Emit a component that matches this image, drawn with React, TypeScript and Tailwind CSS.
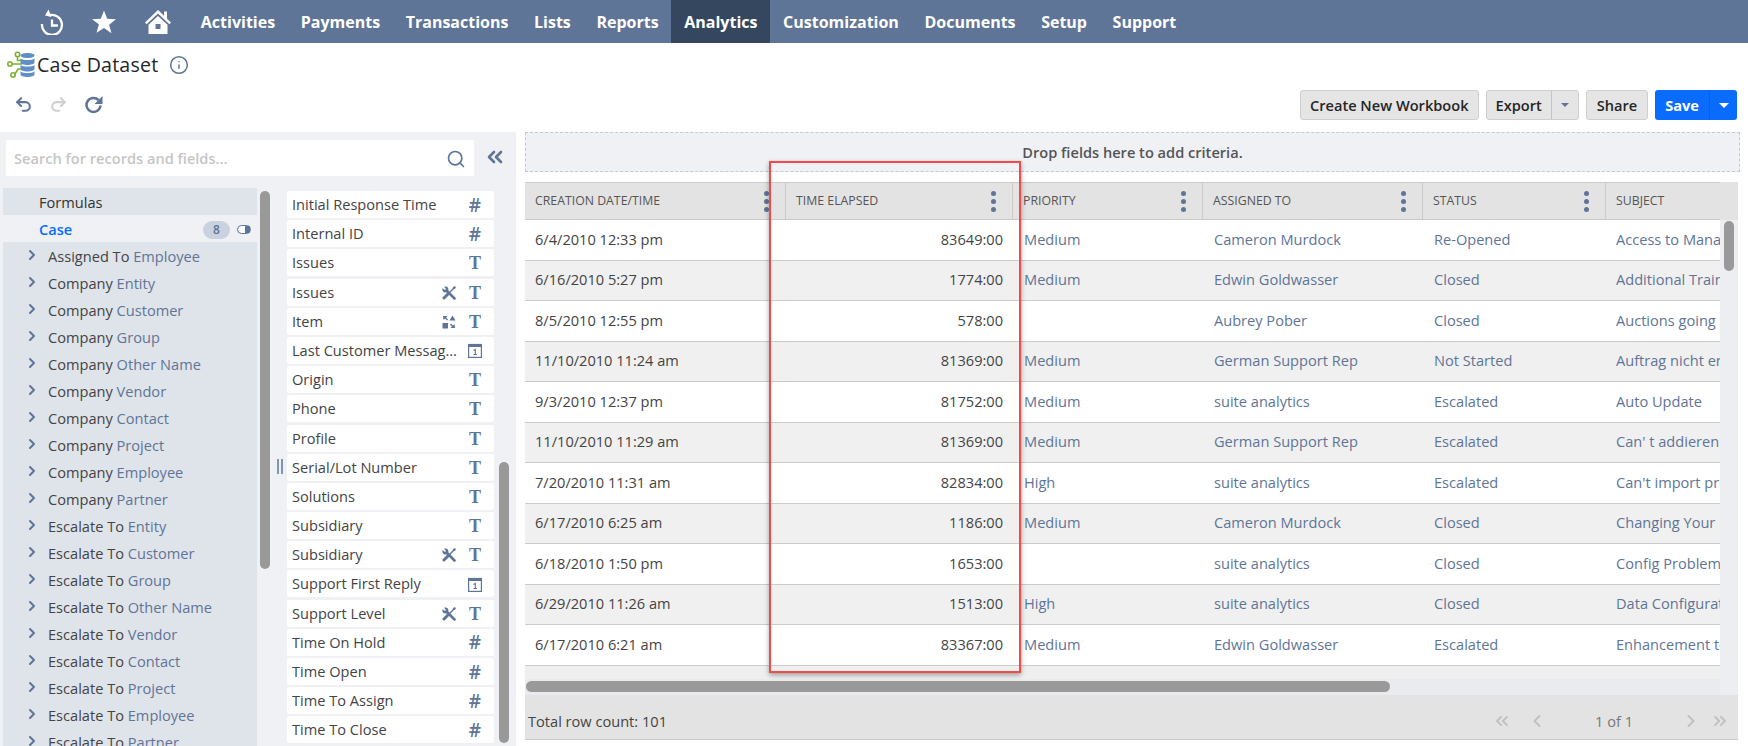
import { ChevronRight, ChevronsLeft, ChevronsRight, ChevronLeft, Info, Redo2, Search, Undo2 } from "lucide-react";

const navItems = ["Activities", "Payments", "Transactions", "Lists", "Reports", "Analytics", "Customization", "Documents", "Setup", "Support"];

const records = [
  ["Assigned To", "Employee"],
  ["Company", "Entity"],
  ["Company", "Customer"],
  ["Company", "Group"],
  ["Company", "Other Name"],
  ["Company", "Vendor"],
  ["Company", "Contact"],
  ["Company", "Project"],
  ["Company", "Employee"],
  ["Company", "Partner"],
  ["Escalate To", "Entity"],
  ["Escalate To", "Customer"],
  ["Escalate To", "Group"],
  ["Escalate To", "Other Name"],
  ["Escalate To", "Vendor"],
  ["Escalate To", "Contact"],
  ["Escalate To", "Project"],
  ["Escalate To", "Employee"],
  ["Escalate To", "Partner"],
];

type FieldType = "num" | "text" | "date";
const fields: { name: string; type: FieldType; extra?: "tools" | "shapes" }[] = [
  { name: "Initial Response Time", type: "num" },
  { name: "Internal ID", type: "num" },
  { name: "Issues", type: "text" },
  { name: "Issues", type: "text", extra: "tools" },
  { name: "Item", type: "text", extra: "shapes" },
  { name: "Last Customer Message Date", type: "date" },
  { name: "Origin", type: "text" },
  { name: "Phone", type: "text" },
  { name: "Profile", type: "text" },
  { name: "Serial/Lot Number", type: "text" },
  { name: "Solutions", type: "text" },
  { name: "Subsidiary", type: "text" },
  { name: "Subsidiary", type: "text", extra: "tools" },
  { name: "Support First Reply", type: "date" },
  { name: "Support Level", type: "text", extra: "tools" },
  { name: "Time On Hold", type: "num" },
  { name: "Time Open", type: "num" },
  { name: "Time To Assign", type: "num" },
  { name: "Time To Close", type: "num" },
];

const columns = [
  { label: "CREATION DATE/TIME", w: "w-[261px]" },
  { label: "TIME ELAPSED", w: "w-[227px]" },
  { label: "PRIORITY", w: "w-[190px]" },
  { label: "ASSIGNED TO", w: "w-[220px]" },
  { label: "STATUS", w: "w-[183px]" },
  { label: "SUBJECT", w: "w-[114px]" },
];

const rows = [
  ["6/4/2010 12:33 pm", "83649:00", "Medium", "Cameron Murdock", "Re-Opened", "Access to Manager"],
  ["6/16/2010 5:27 pm", "1774:00", "Medium", "Edwin Goldwasser", "Closed", "Additional Training"],
  ["8/5/2010 12:55 pm", "578:00", "", "Aubrey Pober", "Closed", "Auctions going live"],
  ["11/10/2010 11:24 am", "81369:00", "Medium", "German Support Rep", "Not Started", "Auftrag nicht erfasst"],
  ["9/3/2010 12:37 pm", "81752:00", "Medium", "suite analytics", "Escalated", "Auto Update"],
  ["11/10/2010 11:29 am", "81369:00", "Medium", "German Support Rep", "Escalated", "Can' t addieren"],
  ["7/20/2010 11:31 am", "82834:00", "High", "suite analytics", "Escalated", "Can't import products"],
  ["6/17/2010 6:25 am", "1186:00", "Medium", "Cameron Murdock", "Closed", "Changing Your Plan"],
  ["6/18/2010 1:50 pm", "1653:00", "", "suite analytics", "Closed", "Config Problem"],
  ["6/29/2010 11:26 am", "1513:00", "High", "suite analytics", "Closed", "Data Configuration"],
  ["6/17/2010 6:21 am", "83367:00", "Medium", "Edwin Goldwasser", "Escalated", "Enhancement to"],
];

function HistoryIcon() {
  return (
    <svg width="24" height="26" viewBox="0 0 24 26" fill="none" stroke="white" strokeWidth="2.3" className="shrink-0">
      <path d="M2 15a10 10 0 1 0 7.500-8.800" />
      <path d="M12 10.500v6h6" />
      <path d="M8.500 0.500l3 7.500-6.500-1.500z" fill="white" stroke="none" />
    </svg>
  );
}

function StarIcon() {
  return (
    <svg width="24" height="24" viewBox="0 0 24 24" fill="white" className="shrink-0">
      <path d="M12 0.500l3.200 8.300 8.800.4-6.900 5.500 2.400 8.600L12 18l-7.500 4.800 2.400-8.600L0 9.200l8.800-.4z" />
    </svg>
  );
}

function HomeIcon() {
  return (
    <svg width="28" height="26" viewBox="0 0 28 26" fill="white" className="shrink-0">
      <path d="M14 1L1 13.500l1.600 1.700L14 4.600l11.400 10.600 1.600-1.700-4-3.800V2.500h-3v4.200z" />
      <path fillRule="evenodd" d="M14 7L4.500 15.800V25h19v-9.200zM11.500 15h5v5h-5z" />
    </svg>
  );
}

function DatasetIcon() {
  return (
    <svg width="30" height="30" viewBox="0 0 30 30" fill="none" className="shrink-0">
      <g stroke="#7ab32e" strokeWidth="1.600">
        <circle cx="11.500" cy="4.500" r="2.200" />
        <circle cx="4" cy="14" r="2.200" />
        <circle cx="7" cy="25" r="2.200" />
        <path d="M11.500 7v3.500h5M6.200 14h10M9 24l3-5h4.500" />
      </g>
      <g fill="#5f8ec9">
        <path d="M14.500 5.500c0-1.600 3.200-2.500 7-2.500s7 .9 7 2.500-3.200 2.500-7 2.500-7-.9-7-2.500z" />
        <path d="M14.500 8.500c1.500 1 4 1.500 7 1.500s5.500-.5 7-1.500v4c0 1.500-3.200 2.500-7 2.500s-7-1-7-2.500z" />
        <path d="M14.500 15c1.500 1 4 1.500 7 1.500s5.500-.5 7-1.500v4c0 1.500-3.200 2.500-7 2.500s-7-1-7-2.500z" />
        <path d="M14.500 21.500c1.500 1 4 1.500 7 1.500s5.500-.5 7-1.500v3c0 1.500-3.200 2.500-7 2.500s-7-1-7-2.500z" />
      </g>
    </svg>
  );
}

function RefreshIcon() {
  return (
    <svg width="19" height="19" viewBox="0 0 19 19" fill="none" stroke="#5f7597" strokeWidth="2.500" className="shrink-0">
      <path d="M14.500 5a7 7 0 1 0 2 5.500" />
      <path d="M18.500 1v8h-8z" fill="#5f7597" stroke="none" />
    </svg>
  );
}

function ToolsIcon() {
  return (
    <svg width="14" height="14" viewBox="0 0 14 14" fill="none" stroke="#5f7597" className="shrink-0">
      {/* wrench */}
      <path d="M5 5l7.500 7.500" strokeWidth="2.600" strokeLinecap="round" />
      <circle cx="3.400" cy="3.400" r="3" fill="#5f7597" stroke="none" />
      <path d="M0 0.500L3.400 3.400 0.500 0z" fill="white" stroke="white" strokeWidth="1.600" />
      {/* screwdriver */}
      <path d="M7 7l5-5" strokeWidth="1.400" />
      <path d="M2 12l4-4" strokeWidth="3" strokeLinecap="round" />
      <path d="M11 1.500L13 0.500l.5.500-1 2z" fill="#5f7597" strokeWidth="0.800" />
    </svg>
  );
}

function ShapesIcon() {
  return (
    <svg width="14" height="14" viewBox="0 0 14 14" fill="#5f7597" className="shrink-0">
      <path d="M10.500 0.500l3 5h-6z" />
      <rect x="0.500" y="8" width="5.500" height="5.500" />
      <path d="M1 1h4.500L4 2.500l2 2-1 1-2-2L1.500 5zM13 13H8.500l1.500-1.500-2-2 1-1 2 2 1.500-1.500z" />
    </svg>
  );
}

function CalendarIcon() {
  return (
    <svg width="14" height="15" viewBox="0 0 14 15" fill="none" className="shrink-0">
      <rect x="0.600" y="1.500" width="12.800" height="12.900" stroke="#5f7597" strokeWidth="1.200" fill="white" />
      <rect x="0.600" y="1" width="12.800" height="3" fill="#5f7597" />
      <path d="M5.500 7.500L7.300 6.500v5M5.500 11.500h3.500" stroke="#5f7597" strokeWidth="1.100" />
    </svg>
  );
}

function TypeGlyph({ type }: { type: FieldType }) {
  if (type === "date") return <CalendarIcon />;
  if (type === "num") {
    return <span className="w-[14px] text-center text-[19px] leading-none font-semibold text-[#5f7597]">#</span>;
  }
  return <span className="w-[14px] text-center font-['Liberation_Serif',serif] text-[18px] leading-none font-bold text-[#5f7597]">T</span>;
}

function DotsMenu() {
  return (
    <div className="flex shrink-0 flex-col gap-[3px]">
      <div className="h-[5px] w-[5px] rounded-full bg-[#5f7597]" />
      <div className="h-[5px] w-[5px] rounded-full bg-[#5f7597]" />
      <div className="h-[5px] w-[5px] rounded-full bg-[#5f7597]" />
    </div>
  );
}

export default function App() {
  return (
    <div className="relative flex h-[746px] w-full flex-col overflow-hidden bg-white font-['Open_Sans',sans-serif] text-[14.600px] text-[#444]">
      {/* Top nav */}
      <header className="flex h-[43px] shrink-0 items-center bg-[#5f7597] pl-[40px]">
        <div className="flex items-center gap-[28px]">
          <HistoryIcon />
          <StarIcon />
          <HomeIcon />
        </div>
        <nav className="ml-[16px] flex h-full items-center">
          {navItems.map((item) => (
            <div
              key={item}
              className={`flex h-full items-center px-[12.800px] text-[16px] font-bold text-white ${item === "Analytics" ? "bg-[#34475f]" : ""}`}
            >
              {item}
            </div>
          ))}
        </nav>
      </header>

      {/* Title */}
      <div className="flex h-[44px] shrink-0 items-center pl-[6px]">
        <DatasetIcon />
        <h1 className="ml-[1px] text-[19.600px] font-normal tracking-[0.2px] text-[#262626]">Case Dataset</h1>
        <Info size={20} strokeWidth={1.800} className="ml-[11px] text-[#5f7597]" />
      </div>

      {/* Toolbar */}
      <div className="flex h-[45px] shrink-0 items-start justify-between pr-[11px] pl-[14px]">
        <div className="flex items-center gap-[16px] pt-[8px]">
          <Undo2 size={19} strokeWidth={2.600} className="text-[#5f7597]" />
          <Redo2 size={19} strokeWidth={2.600} className="text-[#d0d0d0]" />
          <RefreshIcon />
        </div>
        <div className="flex items-center gap-[7px] pt-[3px] text-[#262626]">
          <button className="h-[30px] rounded-[3px] border border-[#cfcfcf] bg-[#e5e5e5] px-[9px] pt-[1px] font-semibold">Create New Workbook</button>
          <div className="flex h-[30px] overflow-hidden rounded-[3px] border border-[#cfcfcf] bg-[#e5e5e5]">
            <button className="border-r border-[#c4c4c4] px-[9px] pt-[1px] font-semibold">Export</button>
            <div className="flex w-[26px] items-center justify-center">
              <div className="h-0 w-0 border-x-[4px] border-t-[4px] border-x-transparent border-t-[#5f7597]" />
            </div>
          </div>
          <button className="h-[30px] rounded-[3px] border border-[#cfcfcf] bg-[#e5e5e5] px-[10px] pt-[1px] font-semibold">Share</button>
          <div className="flex h-[30px] overflow-hidden rounded-[3px] bg-[#0a6cff] text-white">
            <button className="border-r border-[#0a5fe0] px-[10px] pt-[1px] font-bold">Save</button>
            <div className="flex w-[27px] items-center justify-center">
              <div className="h-0 w-0 border-x-[5px] border-t-[5px] border-x-transparent border-t-white" />
            </div>
          </div>
        </div>
      </div>

      <div className="flex min-h-0 flex-1">
        {/* Left panel */}
        <aside className="flex w-[516px] shrink-0 flex-col bg-[#eff1f5]">
          <div className="flex h-[56px] shrink-0 items-start pt-[8px] pl-[6px]">
            <div className="flex h-[36px] w-[468px] items-center justify-between bg-white px-[8px] pt-[1px]">
              <span className="font-semibold text-[#c6c6c6]">Search for records and fields...</span>
              <Search size={20} strokeWidth={2} className="text-[#5f7597]" />
            </div>
            <ChevronsLeft size={24} strokeWidth={2.600} className="mt-[5px] ml-[9px] text-[#5f7597]" />
          </div>
          <div className="flex min-h-0 flex-1">
            {/* Records */}
            <div className="relative ml-[3px] w-[254px] shrink-0 overflow-hidden">
              <div className="flex h-[27px] items-center bg-[#dfe3ea] pt-[2px] pl-[36px] text-[#333]">Formulas</div>
              <div className="flex h-[27px] items-center pt-[2px] pr-[6px] pl-[36px]">
                <span className="flex-1 font-semibold text-[#0a6cff]">Case</span>
                <span className="flex h-[18px] w-[27px] items-center justify-center rounded-full bg-[#c9d2de] text-[12px] font-semibold text-[#5f7597]">8</span>
                <span className="ml-[7px] h-[9px] w-[14px] rounded-full border-[1.500px] border-[#5f7597] bg-[linear-gradient(90deg,white_55%,#5f7597_55%)]" />
              </div>
              <div className="bg-[#dfe3ea]">
                {records.map(([a, b], i) => (
                  <div key={i} className="flex h-[27px] items-center pt-[2px] pl-[21px]">
                    <ChevronRight size={16} strokeWidth={3} className="-mt-[3px] text-[#5f7597]" />
                    <span className="ml-[8px] text-[#444]">
                      {a} <span className="text-[#5f7597]">{b}</span>
                    </span>
                  </div>
                ))}
              </div>
            </div>
            {/* Record scrollbar */}
            <div className="ml-[3px] h-[378px] w-[10px] shrink-0 translate-y-[3px] rounded-[5px] bg-[#999]" />
            {/* Divider handle */}
            <div className="relative w-[17px] shrink-0">
              <div className="absolute top-[271px] left-[7px] h-[15px] w-[6px] border-x-[2px] border-[#7f96b8]" />
            </div>
            {/* Fields */}
            <div className="flex w-[207px] shrink-0 flex-col gap-[2.200px] pt-[3px]">
              {fields.map((f, i) => (
                <div key={i} className="flex h-[27px] shrink-0 items-center rounded-[2px] bg-white pt-[1px] pr-[12px] pl-[5px]">
                  <span className="min-w-0 flex-1 truncate text-[#444]">{f.name}</span>
                  {f.extra === "tools" && <span className="mr-[4px] ml-[4px]"><ToolsIcon /></span>}
                  {f.extra === "shapes" && <span className="mr-[4px] ml-[4px]"><ShapesIcon /></span>}
                  <span className="ml-[8px] flex shrink-0 justify-center"><TypeGlyph type={f.type} /></span>
                </div>
              ))}
            </div>
            {/* Field scrollbar */}
            <div className="ml-[5px] h-[281px] w-[10px] shrink-0 translate-y-[274px] rounded-[5px] bg-[#999]" />
          </div>
        </aside>

        {/* Main */}
        <main className="ml-[9px] flex min-w-0 flex-1 flex-col pr-[8px]">
          <div className="flex h-[40px] shrink-0 items-center justify-center border border-dashed border-[#c3c9d4] bg-[#eff1f5] pt-[2px] font-semibold text-[#555]">
            Drop fields here to add criteria.
          </div>
          <div className="mt-[10px] flex min-h-0 w-[1213px]">
            <div className="w-[1195px] shrink-0 overflow-hidden">
              <div className="flex h-[38px] w-[1195px] border-y border-[#cbcbcb] bg-[#e3e3e3] text-[12.300px] text-[#555]">
                {columns.map((c, i) => (
                  <div key={c.label} className={`flex h-full shrink-0 items-center justify-between pr-[16px] pl-[10px] ${c.w} ${i < 5 ? "border-r border-[#cbcbcb]" : ""}`}>
                    <span>{c.label}</span>
                    {i < 5 && <DotsMenu />}
                  </div>
                ))}
              </div>
              {rows.map((r, i) => (
                <div key={i} className={`flex h-[40.500px] w-[1195px] items-center border-b border-[#cbcbcb] ${i % 2 ? "bg-[#f0f0f0]" : "bg-white"}`}>
                  <div className="w-[261px] shrink-0 pl-[10px] text-[#444]">{r[0]}</div>
                  <div className="w-[227px] shrink-0 pr-[10px] text-right text-[#444]">{r[1]}</div>
                  <div className="w-[190px] shrink-0 pl-[11px] text-[#5f7597]">{r[2]}</div>
                  <div className="w-[220px] shrink-0 pl-[11px] text-[#5f7597]">{r[3]}</div>
                  <div className="w-[183px] shrink-0 pl-[11px] text-[#5f7597]">{r[4]}</div>
                  <div className="w-[114px] shrink-0 overflow-hidden pl-[10px] whitespace-nowrap text-[#5f7597]">{r[5]}</div>
                </div>
              ))}
              <div className="h-[13px] bg-[#efefef]" />
              <div className="flex h-[16px] items-center bg-[#e9ebef] pl-[1px]">
                <div className="h-[11px] w-[864px] rounded-full bg-[#999]" />
              </div>
            </div>
            <div className="flex h-[512.500px] w-[18px] shrink-0 flex-col bg-[#eceef2]">
              <div className="h-[38px] bg-[#e3e3e3]" />
              <div className="mx-auto mt-[1px] h-[50px] w-[10px] rounded-[5px] bg-[#999]" />
            </div>
          </div>
          <div className="flex h-[45px] w-[1213px] shrink-0 items-center justify-between border-b border-[#cbcbcb] bg-[#e3e3e3] pt-[10px] pr-[8px] pl-[3px]">
            <span className="text-[#444]">Total row count: 101</span>
            <div className="flex items-center text-[#c0c0c0]">
              <ChevronsLeft size={20} strokeWidth={2.200} />
              <ChevronLeft size={20} strokeWidth={2.200} className="ml-[15px]" />
              <span className="mx-[48px] text-[#777]">1 of 1</span>
              <ChevronRight size={20} strokeWidth={2.200} />
              <ChevronsRight size={20} strokeWidth={2.200} className="ml-[9px]" />
            </div>
          </div>
        </main>
      </div>

      {/* Red annotation over the Time Elapsed column */}
      <div className="pointer-events-none absolute top-[161px] left-[769px] h-[512px] w-[252px] border-[2.500px] border-[#f24a4a] shadow-[0_2px_5px_rgba(0,0,0,0.35)]" />
    </div>
  );
}
